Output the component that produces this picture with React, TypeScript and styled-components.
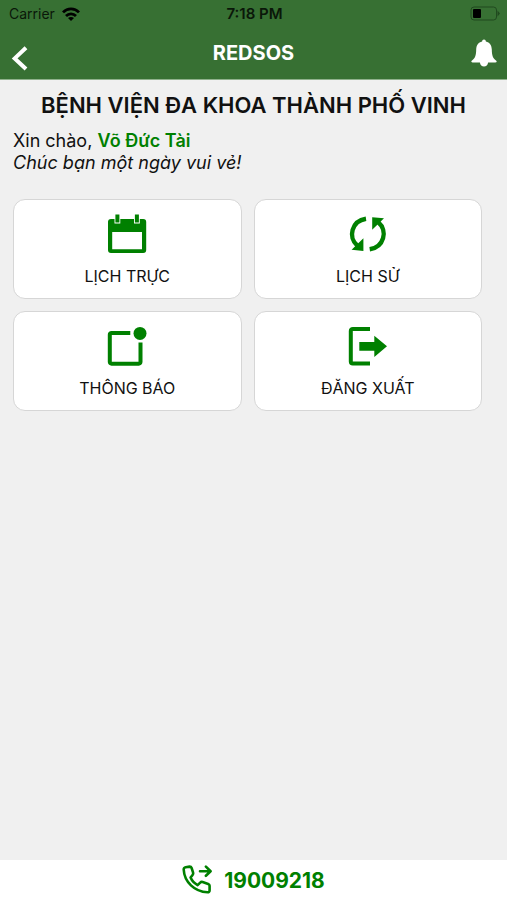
import React from "react";
import styled, { createGlobalStyle } from "styled-components";

const GlobalStyle = createGlobalStyle`
  *, *::before, *::after { box-sizing: border-box; }
  body {
    margin: 0;
    background: #f0f0f0;
    color: #111;
    font-family: Inter, "Liberation Sans", sans-serif;
  }
  button { font-family: inherit; color: inherit; cursor: pointer; }
  svg { display: block; flex: none; }
`;

const Screen = styled.div`
  min-height: 100vh;
  display: flex;
  flex-direction: column;
`;

const Header = styled.header`
  background: #377033;
  border-bottom: 1px solid #8fb18c;
`;

const StatusBar = styled.div`
  display: grid;
  grid-template-columns: 1fr auto 1fr;
  align-items: center;
  height: 27px;
  padding: 0 7px 0 9px;
  font-size: 14px;
  color: #0a1709;
`;

const Carrier = styled.span`
  display: flex;
  align-items: center;
  gap: 7px;
`;

const Clock = styled.time`
  font-size: 15px;
  font-weight: 600;
`;

const Battery = styled.span`
  justify-self: end;
`;

const NavBar = styled.div`
  display: grid;
  grid-template-columns: 1fr auto 1fr;
  height: 52px;
  padding: 0 10px;
`;

const AppTitle = styled.h1`
  margin: 0;
  font-size: 20px;
  line-height: 52px;
  font-weight: 700;
  color: #fff;
`;

const IconButton = styled.button<{ $side: "start" | "end" }>`
  justify-self: ${(p) => p.$side};
  align-self: ${(p) => p.$side === "start" ? "end" : "center"};
  padding: 8px 0;
  border: 0;
  background: none;
`;

const Main = styled.main`
  flex: 1;
  padding: 9px 25px 16px 13px;
`;

const Hospital = styled.h2`
  margin: 0 -12px 9px 0;
  font-size: 22px;
  line-height: 32px;
  font-weight: 600;
  text-align: center;
`;

const Greeting = styled.p`
  margin: 0;
  font-size: 18px;
  line-height: 22px;
`;

const UserName = styled.strong`
  font-weight: 600;
  color: #008000;
`;

const Menu = styled.nav`
  display: grid;
  grid-template-columns: 1fr 1fr;
  gap: 12px;
  margin-top: 25px;
`;

const Card = styled.button`
  display: flex;
  flex-direction: column;
  align-items: center;
  gap: 12px;
  height: 100px;
  padding: 14px 8px;
  border: 1px solid #d6d6d6;
  border-radius: 12px;
  background: #fff;
  font-size: 16px;
  line-height: 20px;
`;

const Footer = styled.footer`
  display: flex;
  justify-content: center;
  height: 40px;
  background: #fff;
`;

const Hotline = styled.a`
  display: flex;
  align-items: center;
  gap: 11px;
  color: #008000;
  font-size: 21px;
  font-weight: 700;
  text-decoration: none;
`;

const WifiIcon = () => (
  <svg width="18" height="14" viewBox="0 0 18 14" fill="none" stroke="#000" strokeWidth="2.8" aria-hidden="true">
    <path d="M1 5.4C5.4.8 12.600.8 17 5.400M4 8.900c2.800-2.800 7.200-2.800 10 0" />
    <path d="M9 14 6 11c1.700-1.500 4.300-1.500 6 0z" fill="#000" stroke="none" />
  </svg>
);

const BatteryIcon = () => (
  <svg width="30" height="15" viewBox="0 0 30 15" role="img" aria-label="Pin">
    <rect x="1" y="1" width="25.5" height="13" rx="3" fill="none" stroke="#20491f" />
    <rect x="3" y="3" width="8" height="9" rx="1" fill="#000" />
    <path d="M27.5 4.5 30 7.5l-2.5 3z" fill="#20491f" />
  </svg>
);

const BackIcon = () => (
  <svg width="18" height="26" viewBox="0 0 18 26" fill="none" stroke="#fff" strokeWidth="4" aria-hidden="true">
    <path d="M16 2.800 4.700 13.400 16 24" />
  </svg>
);

const BellIcon = () => (
  <svg width="26" height="28" viewBox="0 0 26 28" fill="#fff" aria-hidden="true">
    <path d="M13 .4c1.2 0 1.8.8 1.9 2 3.8.9 5.8 3.8 5.9 8 .1 6.100 1 8.600 4.500 11.400.8.8.3 1.700-.8 1.700h-7.400c-.3 2.500-1.900 4-4.100 4s-3.800-1.500-4.100-4H1.500c-1.100 0-1.600-.9-.8-1.700 3.500-2.800 4.400-5.300 4.500-11.400.1-4.200 2.100-7.100 5.900-8 .1-1.200.7-2 1.900-2z" />
  </svg>
);

const CalendarIcon = () => (
  <svg width="40" height="40" viewBox="0 0 40 40" fill="#008000" aria-hidden="true">
    <path fillRule="evenodd" d="M4 5h32.200a3 3 0 0 1 3 3v28a3 3 0 0 1-3 3H4a3 3 0 0 1-3-3V8a3 3 0 0 1 3-3zm1.200 13v17.200h29.800V18z" />
    <path d="M7.500 0h5.800v9.500H7.500zM27 0h5.800v9.500H27z" fill="#fff" />
    <path d="M8.400.5h4v8h-4zM27.900.5h4v8h-4z" />
  </svg>
);

const SyncIcon = () => (
  <svg width="40" height="40" viewBox="0 0 40 40" aria-hidden="true">
    <g fill="none" stroke="#008000" strokeWidth="4.400">
      <path d="M18 4.800C3.500 7-.200 23.500 9.200 31.500" />
      <path d="M21.700 35.200C36.200 33 39.900 16.500 30.500 8.500" />
    </g>
    <path d="M3.600 35.800 15.400 37V24.200zM36 4.200 24.200 3.300v12.500z" fill="#008000" />
  </svg>
);

const NoticeIcon = () => (
  <svg width="40" height="40" viewBox="0 0 40 40" aria-hidden="true">
    <path d="M23.300 6.900H4.500A1.700 1.700 0 0 0 2.800 8.700v27.200A1.700 1.700 0 0 0 4.500 37.700h27.300a1.700 1.700 0 0 0 1.700-1.800V16.500" fill="none" stroke="#008000" strokeWidth="4" />
    <circle cx="33" cy="7.400" r="6.500" fill="#008000" />
  </svg>
);

const LogoutIcon = () => (
  <svg width="40" height="40" viewBox="0 0 40 40" aria-hidden="true">
    <path d="M22 2.900H4.800A2 2 0 0 0 2.800 4.900v30.600a2 2 0 0 0 2 2H22" fill="none" stroke="#008000" strokeWidth="4" />
    <path d="M11.300 15.900h15V9.700L39 20.300 26.300 30.900V24.700h-15z" fill="#008000" />
  </svg>
);

const CallIcon = () => (
  <svg width="31" height="31" viewBox="0 0 31 31" fill="none" stroke="#008000" strokeWidth="2.600" strokeLinejoin="round" strokeLinecap="round" aria-hidden="true">
    <path d="M3.600 2.200 7.600 1.600c1 0 1.700.5 2 1.400l1.500 4.600c.3.900.1 1.600-.5 2.300L8.600 12.600c1.400 3.400 3.500 5.700 7 7.500l2.600-2.500c.7-.7 1.500-.9 2.400-.6l5.600 1.900c.9.300 1.400 1 1.400 1.900v4.500c0 1.300-.8 2.100-2.100 2C12.500 26.600 2.300 17 1.700 4.500c0-1.200.7-2.100 1.900-2.300z" />
    <path d="M18 6.200h10.500M23.900 1.600l4.700 4.600-4.700 4.600" />
  </svg>
);

const menuItems = [
  { label: "LỊCH TRỰC", Icon: CalendarIcon },
  { label: "LỊCH SỬ", Icon: SyncIcon },
  { label: "THÔNG BÁO", Icon: NoticeIcon },
  { label: "ĐĂNG XUẤT", Icon: LogoutIcon },
];

export default function App() {
  return (
    <Screen>
      <GlobalStyle />
      <Header>
        <StatusBar>
          <Carrier>Carrier <WifiIcon /></Carrier>
          <Clock>7:18 PM</Clock>
          <Battery><BatteryIcon /></Battery>
        </StatusBar>
        <NavBar>
          <IconButton $side="start" aria-label="Quay lại"><BackIcon /></IconButton>
          <AppTitle>REDSOS</AppTitle>
          <IconButton $side="end" aria-label="Thông báo"><BellIcon /></IconButton>
        </NavBar>
      </Header>
      <Main>
        <Hospital>BỆNH VIỆN ĐA KHOA THÀNH PHỐ VINH</Hospital>
        <Greeting>Xin chào, <UserName>Võ Đức Tài</UserName></Greeting>
        <Greeting as="em">Chúc bạn một ngày vui vẻ!</Greeting>
        <Menu>
          {menuItems.map(({ label, Icon }) => (
            <Card key={label}><Icon />{label}</Card>
          ))}
        </Menu>
      </Main>
      <Footer>
        <Hotline href="tel:19009218"><CallIcon />19009218</Hotline>
      </Footer>
    </Screen>
  );
}
